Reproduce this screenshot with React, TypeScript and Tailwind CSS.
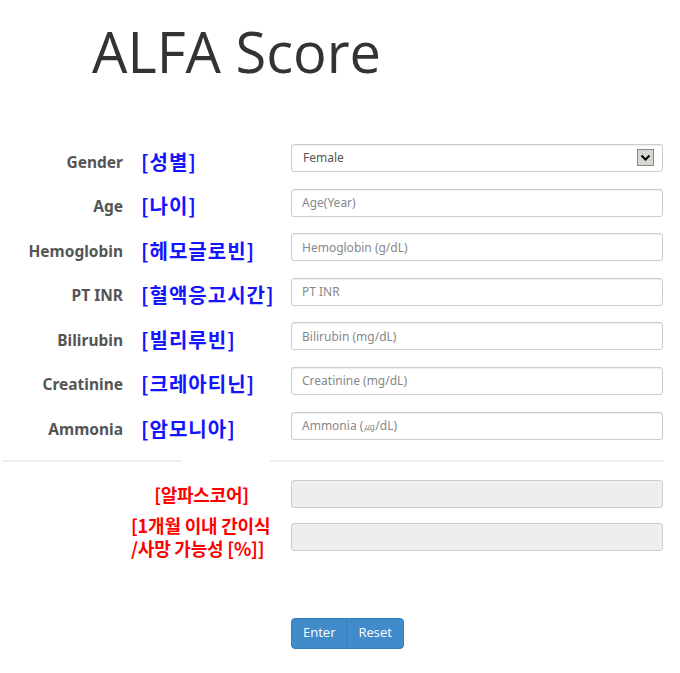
import React from 'react';

const fields = [
  { en: 'Age', ko: '[나이]', ph: 'Age(Year)' },
  { en: 'Hemoglobin', ko: '[헤모글로빈]', ph: 'Hemoglobin (g/dL)' },
  { en: 'PT INR', ko: '[혈액응고시간]', ph: 'PT INR' },
  { en: 'Bilirubin', ko: '[빌리루빈]', ph: 'Bilirubin (mg/dL)' },
  { en: 'Creatinine', ko: '[크레아티닌]', ph: 'Creatinine (mg/dL)' },
  { en: 'Ammonia', ko: '[암모니아]', ph: 'Ammonia (㎍/dL)' },
];

function Label({ en, ko }: { en: string; ko: string }) {
  return (
    <div className="flex h-[28px] w-[291px] shrink-0 items-center pt-[7px]">
      <div className="w-[123px] text-right font-['Noto_Sans',sans-serif] text-[15.5px] font-bold leading-[20px] text-[#555]">
        {en}
      </div>
      <div className="ml-[18px] font-['Noto_Sans_CJK_KR',sans-serif] text-[20px] font-bold leading-[20px] tracking-[1px] text-[#1414ff]">
        {ko}
      </div>
    </div>
  );
}

const inputCls =
  "h-[28px] w-[372px] rounded-[3px] border border-[#ccc] bg-white px-[10px] font-['Noto_Sans',sans-serif] text-[12px] text-[#555] placeholder:text-[#888] shadow-[inset_0_1px_1px_rgba(0,0,0,0.075)] outline-none";

export default function App() {
  return (
    <div className="min-h-[673px] w-[680px] bg-white font-['Noto_Sans',sans-serif]">
      <h1 className="pl-[92px] pt-[17px] font-['Open_Sans',sans-serif] text-[56px] font-normal leading-[68px] text-[#333]">
        ALFA Score
      </h1>

      <div className="mt-[59px] flex flex-col gap-[16.6px]">
        <div className="flex items-center">
          <Label en="Gender" ko="[성별]" />
          <div className="relative">
            <select className={inputCls + ' appearance-none pl-[11px]'} defaultValue="Female">
              <option>Female</option>
              <option>Male</option>
            </select>
            <div className="pointer-events-none absolute right-[9px] top-[5px] flex h-[17px] w-[17px] items-center justify-center border border-[#888] bg-[#d8d6d0]">
              <svg width="11" height="8" viewBox="0 0 11 8">
                <path d="M1.5 1.5 L5.5 5.5 L9.5 1.5" fill="none" stroke="#000" strokeWidth="2" />
              </svg>
            </div>
          </div>
        </div>
        {fields.map((f) => (
          <div key={f.en} className="flex items-center">
            <Label en={f.en} ko={f.ko} />
            <input className={inputCls} placeholder={f.ph} />
          </div>
        ))}
      </div>

      <div className="mt-[20px] flex h-[2px] w-[664px] pl-[2px]">
        <div className="w-[180px] bg-[#eee]" />
        <div className="ml-[88px] flex-1 bg-[#eee]" />
      </div>

      <div className="mt-[18px] flex items-center">
        <div className="ml-[131px] w-[141px] shrink-0 text-center font-['Noto_Sans_CJK_KR',sans-serif] text-[18px] font-bold leading-[22px] tracking-[-0.3px] text-[#f00]">
          [알파스코어]
        </div>
        <div className="ml-[19px] h-[28px] w-[372px] rounded-[3px] border border-[#ccc] bg-[#eee]" />
      </div>

      <div className="mt-[6px] flex items-center">
        <div className="ml-[131px] w-[145px] shrink-0 whitespace-nowrap font-['Noto_Sans_CJK_KR',sans-serif] text-[18px] font-bold leading-[23px] tracking-[-0.2px] text-[#f00]">
          [1개월 이내 간이식
          <br />
          /사망 가능성 [%]]
        </div>
        <div className="ml-[15px] h-[28px] w-[372px] rounded-[3px] border border-[#ccc] bg-[#eee]" />
      </div>

      <div className="ml-[291px] mt-[58px] flex">
        <button className="h-[31px] rounded-l-[4px] border border-[#357ebd] bg-[#428bca] px-[11px] font-['Open_Sans',sans-serif] text-[13px] text-white">
          Enter
        </button>
        <button className="-ml-px h-[31px] rounded-r-[4px] border border-[#357ebd] bg-[#428bca] px-[11px] font-['Open_Sans',sans-serif] text-[13px] text-white">
          Reset
        </button>
      </div>
    </div>
  );
}
